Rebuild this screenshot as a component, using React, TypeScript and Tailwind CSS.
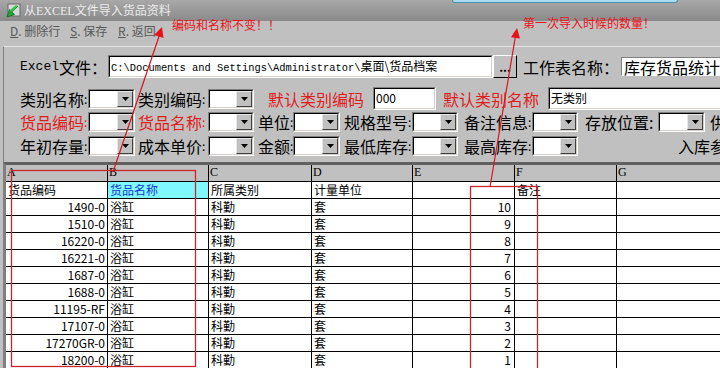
import React from 'react';

const CJK = '"Noto Sans CJK SC", "Noto Sans", sans-serif';

const rows: [string, string][] = [
  ['1490-0', '10'],
  ['1510-0', '9'],
  ['16220-0', '8'],
  ['16221-0', '7'],
  ['1687-0', '6'],
  ['1688-0', '5'],
  ['11195-RF', '4'],
  ['17107-0', '3'],
  ['17270GR-0', '2'],
  ['18200-0', '1'],
];

const cols = ['A', 'B', 'C', 'D', 'E', 'F', 'G'];

function Arrow() {
  return (
    <svg width="7" height="4" viewBox="0 0 7 4">
      <path d="M0 0h7L3.5 4z" fill="#000" />
    </svg>
  );
}

function Combo({ className }: { className: string }) {
  return (
    <div className={`${className} h-[20px] shrink-0 border border-t-[#808080] border-l-[#808080] border-b-white border-r-white`}>
      <div className="flex h-full border border-t-black border-l-black border-b-[#d4d0c8] border-r-[#d4d0c8] bg-white">
        <div className="flex-1" />
        <div className="flex w-[16px] items-center justify-center border border-t-[#e8e8e8] border-l-[#e8e8e8] border-b-[#404040] border-r-[#404040] bg-[#c0c0c0]">
          <Arrow />
        </div>
      </div>
    </div>
  );
}

function Label({ text, className, red }: { text: string; className: string; red?: boolean }) {
  return (
    <div className={`${className} flex shrink-0 items-center whitespace-nowrap ${red ? 'text-[#e01c1c]' : 'text-black'}`}>
      <span>{text}</span>
      <span className="text-[12px]">:</span>
    </div>
  );
}

function TextBox({ className, children }: { className: string; children?: React.ReactNode }) {
  return (
    <div className={`${className} shrink-0 border border-t-[#808080] border-l-[#808080] border-b-white border-r-white`}>
      <div className="h-full border border-t-black border-l-black border-b-[#d4d0c8] border-r-[#d4d0c8] bg-white pl-[1px] text-[12px] leading-[17px]">
        {children}
      </div>
    </div>
  );
}

function GreenIcon() {
  return (
    <svg width="16" height="16" viewBox="0 0 16 16">
      <rect x="3" y="1" width="12" height="12" fill="#d8d8d8" stroke="#6a6a6a" />
      <path d="M13 3 L7 9 L9.5 11.5 L2 14 L4.5 6.5 L7 9 Z" fill="#1faa3a" stroke="#0d6a20" strokeWidth="0.8" />
      <path d="M11 2 L13 3 L7 9 L5 7 Z" fill="#37c94f" />
    </svg>
  );
}

export default function App() {
  return (
    <div className="relative h-[368px] w-[720px] overflow-hidden bg-[#c0c0c0]" style={{ fontFamily: CJK }}>
      {/* title bar */}
      <div className="flex h-[21px] items-center bg-gradient-to-b from-[#a8a8a8] to-[#8a8a8a]">
        <div className="ml-[5px]">
          <GreenIcon />
        </div>
        <span className="ml-[3px] text-[12px] text-[#ececec]" style={{ fontFamily: '"Liberation Serif", "Noto Sans CJK SC", serif' }}>
          从EXCEL文件导入货品资料
        </span>
      </div>
      <div className="absolute left-[452px] top-0 h-[3px] w-[226px] rounded-b-[3px] border-b border-l border-r border-[#4f90b0] bg-[#a9dcf0]" />

      {/* menu */}
      <div className="flex h-[20px] items-center text-[12px] text-[#585858]">
        <span className="ml-[10px] w-[60px] whitespace-pre"><u>D</u>. 删除行</span>
        <span className="w-[48px] whitespace-pre"><u>S</u>. 保存</span>
        <span className="whitespace-pre"><u>R</u>. 返回</span>
      </div>

      {/* form panel */}
      <div className="ml-[3px] mt-[5px] border-l border-t border-l-[#808080] border-t-[#e4e4e4] pb-[4px] pl-[16px] text-[16px] leading-none">
        <div className="mt-[8px] flex h-[23px] items-center">
          <div className="flex w-[88px] shrink-0 items-center">
            <span style={{ fontFamily: '"Liberation Mono", monospace' }} className="text-[13px]">Excel</span>
            <span>文件：</span>
          </div>
          <TextBox className="h-[23px] w-[385px]">
            <span className="text-[10.4px]" style={{ fontFamily: '"Liberation Mono", monospace' }}>C:\Documents and Settings\Administrator\</span>
            <span>桌面\货品档案</span>
          </TextBox>
          <div className="flex h-[23px] w-[24px] shrink-0 items-center justify-center border border-t-white border-l-white border-b-black border-r-black bg-[#c0c0c0] text-[12px] font-bold">
            ...
          </div>
          <span className="ml-[6px] w-[98px] shrink-0">工作表名称：</span>
          <div className="flex h-[19px] w-[120px] shrink-0 items-center border border-t-[#808080] border-l-[#808080] border-b-white border-r-white bg-white pl-[2px] text-[16px]">
            <span className="flex-1">库存货品统计</span>
          </div>
        </div>

        <div className="mt-[9px] flex h-[23px] items-center">
          <Label text="类别名称" className="w-[68px]" />
          <Combo className="w-[47px]" />
          <Label text="类别编码" className="ml-[3px] w-[70px]" />
          <Combo className="w-[46px]" />
          <span className="ml-[14px] w-[96px] shrink-0 text-[#e01c1c]">默认类别编码</span>
          <TextBox className="ml-[9px] h-[23px] w-[63px]">000</TextBox>
          <span className="ml-[7px] w-[96px] shrink-0 text-[#e01c1c]">默认类别名称</span>
          <TextBox className="ml-[9px] h-[23px] w-[180px]">无类别</TextBox>
        </div>

        <div className="flex h-[24px] items-center">
          <Label text="货品编码" className="w-[68px]" red />
          <Combo className="w-[47px]" />
          <Label text="货品名称" className="ml-[3px] w-[70px]" red />
          <Combo className="w-[46px]" />
          <Label text="单位" className="ml-[4px] w-[35px]" />
          <Combo className="w-[47px]" />
          <Label text="规格型号" className="ml-[4px] w-[68px]" />
          <Combo className="w-[46px]" />
          <Label text="备注信息" className="ml-[6px] w-[68px]" />
          <Combo className="w-[46px]" />
          <span className="ml-[7px] w-[73px] shrink-0">存放位置:</span>
          <Combo className="w-[47px]" />
          <span className="ml-[5px] shrink-0">供</span>
        </div>

        <div className="flex h-[24px] items-center">
          <Label text="年初存量" className="w-[68px]" />
          <Combo className="w-[47px]" />
          <Label text="成本单价" className="ml-[3px] w-[70px]" />
          <Combo className="w-[46px]" />
          <Label text="金额" className="ml-[4px] w-[35px]" />
          <Combo className="w-[47px]" />
          <Label text="最低库存" className="ml-[4px] w-[68px]" />
          <Combo className="w-[46px]" />
          <Label text="最高库存" className="ml-[6px] w-[68px]" />
          <Combo className="w-[46px]" />
          <span className="ml-[100px] shrink-0 whitespace-nowrap">入库参</span>
        </div>
      </div>

      {/* grid panel */}
      <div className="ml-[3px] border-l-[3px] border-t-[3px] border-l-[#808080] border-t-[#606060] text-[12px] leading-[16px]">
        <div className="grid grid-cols-[102px_101px_103px_101px_102px_102px_110px]">
          {cols.map((c) => (
            <div key={c} className="h-[17px] border-b border-r border-black bg-[#c0c0c0] pl-[1px] text-[12px] leading-[14px]" style={{ fontFamily: '"Liberation Serif", serif' }}>
              {c}
            </div>
          ))}
          <div className="h-[17px] border-b border-r border-black bg-white pl-[2px]">货品编码</div>
          <div className="h-[17px] border-b border-r border-black bg-[#80f8ff] pl-[2px] text-[#1838d0]">货品名称</div>
          <div className="h-[17px] border-b border-r border-black bg-white pl-[2px]">所属类别</div>
          <div className="h-[17px] border-b border-r border-black bg-white pl-[2px]">计量单位</div>
          <div className="h-[17px] border-b border-r border-black bg-white" />
          <div className="h-[17px] border-b border-r border-black bg-white pl-[2px]">备注</div>
          <div className="h-[17px] border-b border-r border-black bg-white" />
          {rows.map(([code, qty]) => (
            <React.Fragment key={code}>
              <div className="h-[17px] border-b border-r border-black bg-white pr-[2px] text-right">{code}</div>
              <div className="h-[17px] border-b border-r border-black bg-white pl-[2px]">浴缸</div>
              <div className="h-[17px] border-b border-r border-black bg-white pl-[2px]">科勤</div>
              <div className="h-[17px] border-b border-r border-black bg-white pl-[2px]">套</div>
              <div className="h-[17px] border-b border-r border-black bg-white pr-[3px] text-right">{qty}</div>
              <div className="h-[17px] border-b border-r border-black bg-white" />
              <div className="h-[17px] border-b border-r border-black bg-white" />
            </React.Fragment>
          ))}
        </div>
      </div>

      {/* annotations */}
      <span className="absolute left-[172px] top-[18px] text-[12px] leading-[14px] text-[#e8141a]">编码和名称不变！！</span>
      <span className="absolute left-[523px] top-[16px] text-[12px] leading-[14px] text-[#e8141a]">第一次导入时候的数量！</span>
      <svg className="pointer-events-none absolute left-0 top-0" width="720" height="368">
        <rect x="11.5" y="170.5" width="184" height="196" fill="none" stroke="#c8262c" strokeWidth="1.3" />
        <rect x="470.5" y="186.5" width="67" height="190" fill="none" stroke="#c8262c" strokeWidth="1.3" />
        <line x1="113" y1="172" x2="159.5" y2="35" stroke="#d8141c" strokeWidth="1.2" />
        <path d="M162 27 L163.5 38.1 L154.1 34.9 Z" fill="#ea1018" />
        <line x1="490" y1="187" x2="515.5" y2="36" stroke="#d8141c" strokeWidth="1.2" />
        <path d="M517 28 L520 38.6 L511 37.2 Z" fill="#ea1018" />
      </svg>
    </div>
  );
}
